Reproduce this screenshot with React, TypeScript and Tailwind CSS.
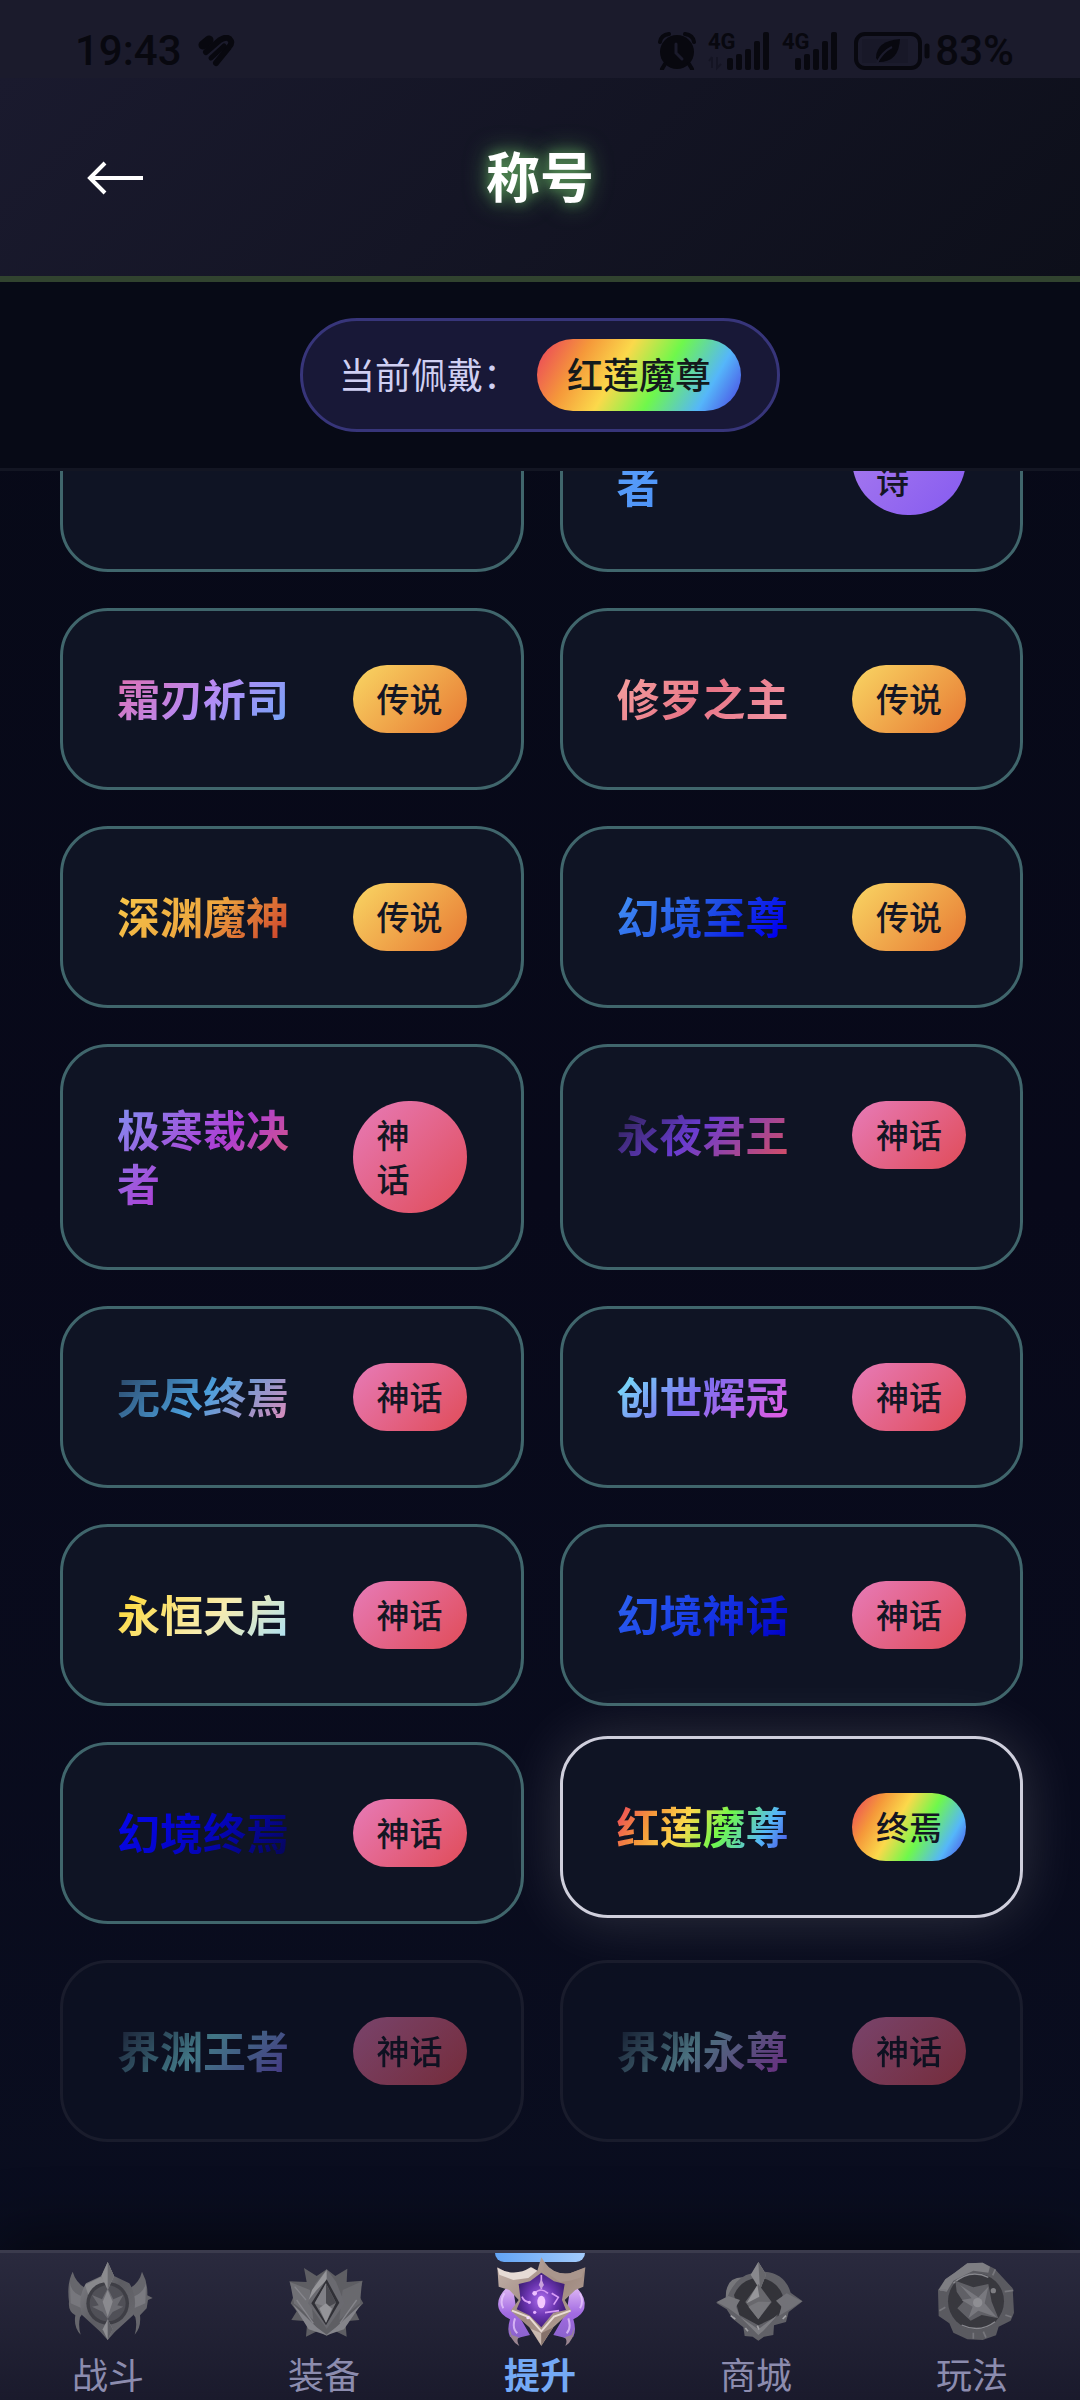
import { useEffect, useRef, useState } from "react";
import clsx from "clsx";

type Rarity = "epic" | "legend" | "myth" | "final";

type TitleItem = {
  id: number;
  name: string;
  rarity: Rarity;
  color: string;
  locked?: boolean;
};

const rarityLabel: Record<Rarity, string> = {
  epic: "史诗",
  legend: "传说",
  myth: "神话",
  final: "终焉",
};

const rainbow = "bg-[linear-gradient(120deg,#ea3d5e_0%,#f5983a_22%,#fbd94b_40%,#6ff84b_60%,#55b6fa_82%,#4a3fe0_100%)]";

const rarityStyle: Record<Rarity, string> = {
  epic: "bg-[linear-gradient(135deg,#ae80ee,#855af0)]",
  legend: "bg-[linear-gradient(135deg,#f9d663,#e77833)]",
  myth: "bg-[linear-gradient(135deg,#e77bb8,#e04c58)]",
  final: rainbow,
};

const titles: TitleItem[] = [
  { id: 1, name: "星辰使徒", rarity: "epic", color: "bg-[linear-gradient(135deg,#60a5fa,#3b82f6)]" },
  { id: 2, name: "苍穹守望者", rarity: "epic", color: "bg-[linear-gradient(135deg,#60a5fa,#3b82f6)]" },
  { id: 3, name: "霜刃祈司", rarity: "legend", color: "bg-[linear-gradient(135deg,#e06fae_0%,#b78af4_50%,#6fa6f8_100%)]" },
  { id: 4, name: "修罗之主", rarity: "legend", color: "bg-[linear-gradient(135deg,#f5a3a0_0%,#e87587_50%,#f59aa8_100%)]" },
  { id: 5, name: "深渊魔神", rarity: "legend", color: "bg-[linear-gradient(135deg,#f8c84a_0%,#eda73f_50%,#c9362a_100%)]" },
  { id: 6, name: "幻境至尊", rarity: "legend", color: "bg-[linear-gradient(135deg,#4596f7_0%,#1f4fe4_50%,#0000ee_90%)]" },
  { id: 7, name: "极寒裁决者", rarity: "myth", color: "bg-[linear-gradient(135deg,#8092f2_0%,#ad3ed4_50%,#d0528c_75%,#ea5a6a_100%)]" },
  { id: 8, name: "永夜君王", rarity: "myth", color: "bg-[linear-gradient(135deg,#2f2358_5%,#6a3cd0_45%,#dc4f5e_100%)]" },
  { id: 9, name: "无尽终焉", rarity: "myth", color: "bg-[linear-gradient(135deg,#2c4a6b_5%,#4b9fdc_50%,#e88ab8_100%)]" },
  { id: 10, name: "创世辉冠", rarity: "myth", color: "bg-[linear-gradient(135deg,#76f0fa_0%,#7d6ff0_45%,#d85de4_90%)]" },
  { id: 11, name: "永恒天启", rarity: "myth", color: "bg-[linear-gradient(135deg,#fdd835_5%,#f8ecae_55%,#a8e0f8_100%)]" },
  { id: 12, name: "幻境神话", rarity: "myth", color: "bg-[linear-gradient(135deg,#2f66f0_0%,#1a3fe8_45%,#0000c8_95%)]" },
  { id: 13, name: "幻境终焉", rarity: "myth", color: "bg-[linear-gradient(135deg,#0606f0_0%,#0404c4_50%,#06065c_95%)]" },
  { id: 14, name: "红莲魔尊", rarity: "final", color: rainbow },
  { id: 15, name: "界渊王者", rarity: "myth", locked: true, color: "bg-[linear-gradient(135deg,#33465c_8%,#7ae0ec_48%,#7f6fe8_92%)]" },
  { id: 16, name: "界渊永尊", rarity: "myth", locked: true, color: "bg-[linear-gradient(135deg,#2a3d50_8%,#8ad2dc_45%,#c25ae0_90%)]" },
];

function SignalIcon({ offset, data }: { offset: number; data?: boolean }) {
  const tops = [26, 22, 17, 9, 0];
  return (
    <svg width={offset + 43} height="38" className="overflow-visible" fill="currentColor">
      <text x="0" y="17" fontSize="22" fontWeight="700" fontFamily="Roboto, sans-serif">4G</text>
      {data && <path d="M4 25v11m-3-7 3-4M9 25v11l4-4" stroke="currentColor" strokeWidth="2" fill="none" opacity="0.3" />}
      {tops.map((top, i) => (
        <rect key={i} x={offset + i * 9} y={top} width="6" height={38 - top} rx="2" />
      ))}
    </svg>
  );
}

function StatusBar() {
  return (
    <div className="flex h-[78px] shrink-0 items-center justify-between bg-[#1b1b2c] pt-6 pr-[66px] pl-[75px] font-[Roboto,sans-serif] text-[42px] leading-[54px] font-medium text-[#08080f]">
      <div className="flex items-center gap-4">
        <span>19:43</span>
        <svg width="38" height="32" viewBox="0 0 38 32" fill="none" stroke="currentColor" strokeLinecap="round">
          <path d="M5 10 11 5" strokeWidth="9" />
          <path d="M8 17 22 5Q30 0 33 6 34 9 31 12L18 28" strokeWidth="6" />
          <path d="M13 23 26 11" strokeWidth="5" />
        </svg>
      </div>
      <div className="flex items-center gap-3">
        <svg width="38" height="38" viewBox="0 0 38 38" fill="currentColor">
          <circle cx="19" cy="20" r="17" />
          <path d="M2 10Q3 3 11 2M36 10Q35 3 27 2M7 32l-3 5M31 32l3 5" stroke="currentColor" strokeWidth="4" fill="none" strokeLinecap="round" />
          <path d="M18 12v9l6 6" stroke="#1b1b2c" strokeWidth="3" fill="none" strokeLinecap="round" />
        </svg>
        <SignalIcon offset={19} data />
        <SignalIcon offset={13} />
        <div className="flex items-center gap-1 pl-1">
          <svg width="77" height="38" viewBox="0 0 77 38" fill="none" stroke="currentColor">
            <rect x="2" y="2" width="64" height="34" rx="9" strokeWidth="4" />
            <rect x="8" y="7" width="46" height="24" fill="currentColor" stroke="none" opacity="0.12" />
            <path d="M22 26Q22 9 46 7 45 30 25 30Z" fill="currentColor" stroke="none" />
            <path d="M23 31Q28 20 38 15" stroke="#1b1b2c" strokeWidth="2" />
            <path d="M73 14v10" strokeWidth="5" strokeLinecap="round" />
          </svg>
          <span>83%</span>
        </div>
      </div>
    </div>
  );
}

function Header() {
  return (
    <header className="grid h-[204px] shrink-0 grid-cols-[1fr_auto_1fr] items-center border-b-[6px] border-[#31432f] bg-[linear-gradient(135deg,#1a1a2e_0%,#0d0f1a_100%)] px-[75px]">
      <button type="button" aria-label="返回" className="justify-self-start px-3 py-2 text-white">
        <svg width="56" height="36" viewBox="0 0 56 36" fill="none" stroke="currentColor" strokeWidth="4">
          <path d="M56 19H3M18 4 3 19l15 15" />
        </svg>
      </button>
      <h1 className="pb-1 text-[54px] leading-[72px] font-bold text-white [text-shadow:0_0_24px_#5a9a58,0_0_12px_#4c8050]">称号</h1>
    </header>
  );
}

function TitleCard({ item, active, onSelect }: { item: TitleItem; active: boolean; onSelect: () => void }) {
  const wraps = item.name.length > 4;
  const label = rarityLabel[item.rarity];
  return (
    <button
      type="button"
      onClick={onSelect}
      disabled={item.locked}
      className={clsx(
        "flex items-start rounded-[48px] border-[3px] bg-[#0f1424] p-[54px] text-left",
        active && "-translate-y-[6px] border-[#cfcfdc] shadow-[0_0_60px_rgba(255,255,255,0.16)]",
        !active && !item.locked && "border-[#40666c]",
        item.locked && "border-[#2a2c3a] opacity-50"
      )}
    >
      <span className="flex flex-1 items-center justify-between">
        <span className={clsx("max-w-[180px] bg-clip-text pb-1 text-[43px] leading-[54px] font-bold text-transparent", item.color)}>
          {item.name}
        </span>
        <span className={clsx("min-w-[114px] rounded-full px-6 pt-[11px] pb-[13px] text-[33px] leading-[44px] font-medium text-[#141624]", rarityStyle[item.rarity])}>
          {wraps ? <>{label[0]}<br />{label[1]}</> : label}
        </span>
      </span>
    </button>
  );
}

function BattleIcon() {
  return (
    <svg viewBox="198 57 252 252" className="size-[84px] overflow-visible">
      <defs>
        <linearGradient id="steel" x1="0" y1="0" x2="1" y2="1">
          <stop offset="0" stopColor="#85858b" />
          <stop offset="0.5" stopColor="#5c5c62" />
          <stop offset="1" stopColor="#6d6d73" />
        </linearGradient>
      </defs>
      <path d="M218 95Q228 130 262 148L252 215 240 232Q234 258 242 284 220 262 226 226 204 214 207 185 200 130 218 95Z" fill="#66666c" />
      <path d="M426 95Q418 130 384 148L394 215 406 232Q412 258 404 284 424 262 420 226L440 205 444 180 458 174 442 166Q444 128 426 95Z" fill="#66666c" />
      <path d="M210 130Q215 160 250 170L245 205 212 190Z" fill="#77777d" />
      <path d="M438 130Q430 160 396 172L402 205 436 190Z" fill="#7a7a80" />
      <path d="M323 66 342 108 388 130Q415 175 400 225L345 275 323 300 301 275 246 225Q231 175 258 130L304 108Z" fill="url(#steel)" />
      <path d="M255 135 304 110 323 135 265 165Z" fill="#88888c" />
      <circle cx="323" cy="190" r="64" fill="#3e3e45" />
      <circle cx="323" cy="190" r="54" fill="#505057" />
      <path d="M323 66 342 108 323 150 304 108Z" fill="#8b8b8f" />
      <path d="M323 66 342 108 323 150Z" fill="#6a6a6f" />
      <path d="M323 145 340 178 370 165 352 196 370 200 338 216 323 236 308 216 276 200 296 196 276 165 306 178Z" fill="#6c6c72" />
      <path d="M323 150 338 185 323 230 308 185Z" fill="#8a8a8f" />
      <path d="M323 238 338 268 323 300 308 268Z" fill="#8e8e92" />
      <path d="M323 238 338 268 323 300Z" fill="#5d5d63" />
    </svg>
  );
}

function GearIcon() {
  return (
    <svg viewBox="846 57 252 252" className="size-[84px] overflow-visible">
      <path d="M980 88 1006 108 1042 86 1040 126 1088 122 1076 166 1090 190 1066 214 1078 240 1036 244 1040 290 1004 272 980 288 954 272 918 290 922 244 874 240 890 214 872 190 882 166 868 124 920 126 912 84 950 108Z" fill="#5e5e63" />
      <path d="M870 126 930 150 940 240 882 190Z" fill="#707075" />
      <path d="M1086 124 1028 150 1018 240 1080 190Z" fill="#69696e" />
      <path d="M878 192 950 262 980 284 1008 262 1084 192 1032 268 980 286 926 268Z" fill="#84848a" />
      <path d="M980 88 1008 125 1034 190 980 266 924 190 946 130Z" fill="#6a6a70" />
      <path d="M980 90 936 150 926 180 950 150 980 120Z" fill="#96969a" />
      <path d="M980 118 1018 188 978 256 934 190Z" fill="#303036" />
      <path d="M978 130 1008 188 978 248 944 190Z" fill="#707075" />
      <path d="M978 130 1008 188 978 205Z" fill="#4a4a50" />
      <path d="M978 130 978 200 944 190Z" fill="#808086" />
      <path d="M958 205 978 190 996 206 978 248Z" fill="#949499" />
      <path d="M890 180 940 250M1070 180 1020 250M884 140 918 180" stroke="#85858b" strokeWidth="4" />
    </svg>
  );
}

function UpgradeIcon() {
  return (
    <svg viewBox="285 48 270 270" className="relative size-[90px] overflow-visible">
      <defs>
        <linearGradient id="wing" x1="0" y1="0" x2="0" y2="1">
          <stop offset="0" stopColor="#dcb4f4" />
          <stop offset="0.5" stopColor="#a26be2" />
          <stop offset="1" stopColor="#8a62cc" />
        </linearGradient>
        <linearGradient id="metal" x1="0" y1="0" x2="1" y2="1">
          <stop offset="0" stopColor="#c4b3ac" />
          <stop offset="0.5" stopColor="#a08a80" />
          <stop offset="1" stopColor="#b9a79e" />
        </linearGradient>
        <radialGradient id="core">
          <stop offset="0" stopColor="#b070f0" />
          <stop offset="0.6" stopColor="#6a34b0" />
          <stop offset="1" stopColor="#43207c" />
        </radialGradient>
      </defs>
      <path d="M318 145Q288 175 296 205 302 225 330 238 320 270 330 290 345 300 362 292L390 285 350 215 340 150Z" fill="url(#wing)" />
      <path d="M532 145Q560 175 553 205 548 225 520 238 530 270 520 290 505 300 488 292L460 285 500 215 510 150Z" fill="url(#wing)" />
      <path d="M328 262Q326 300 358 318 348 302 356 292L335 285ZM522 262Q524 300 496 318 504 302 494 292L515 285Z" fill="#9a8590" />
      <path d="M313 160Q298 185 310 205M540 160Q552 185 540 205M345 235Q335 265 352 280M505 235Q515 265 500 280" stroke="#ecd0ff" strokeWidth="6" fill="none" opacity="0.7" />
      <path d="M424 52 436 70Q460 108 510 100L556 82 550 140 526 150 494 180 514 212 460 262 424 318 388 262 332 212 356 180 328 150 296 140 292 82 325 100Q370 108 395 82L412 92Z" fill="url(#metal)" />
      <path d="M292 84Q345 112 392 82L412 92 385 114 340 120 298 104Z" fill="#e6dbd6" />
      <path d="M432 66Q462 106 510 100L554 84 545 112 510 122 480 126 430 92Z" fill="#aa968d" />
      <path d="M424 98 462 124 494 132 486 180 498 210 460 218 424 262 388 226 350 208 362 180 356 132 390 124Z" fill="url(#core)" />
      <path d="M336 212 388 232 424 274 462 230 512 212" fill="none" stroke="#e9dbd4" strokeWidth="6" />
      <path d="M424 280V316L392 266Z" fill="#c9b9b0" />
      <path d="M424 280V316L460 262Z" fill="#86726b" />
      <ellipse cx="424" cy="186" rx="12" ry="19" fill="#f3c8ff" />
      <path d="M424 105v42M404 160q18-20 40 0M366 170q6 16 22 16M455 160l20 12-14 22M435 218l42-6" stroke="#d89cf6" strokeWidth="5" fill="none" />
      <path d="M416 135 424 118 432 135 424 146Z" fill="#c9a0dc" />
      <circle cx="404" cy="160" r="7" fill="#eec0ff" />
      <circle cx="388" cy="187" r="5" fill="#e4b0ff" />
      <circle cx="404" cy="217" r="5" fill="#e4b0ff" />
      <circle cx="384" cy="233" r="5" fill="#f3d8ff" />
    </svg>
  );
}

function ShopIcon() {
  return (
    <svg viewBox="102 57 252 252" className="size-[84px] overflow-visible">
      <path d="M138 182Q132 112 188 112L200 150 160 200Z" fill="#77777b" />
      <path d="M235 66 254 95Q315 100 332 158L368 184 326 216 318 246 282 256 280 285 252 290 235 302 218 290 194 288 190 262 158 236 140 208 108 188 140 176Q165 110 216 100Z" fill="#616167" />
      <path d="M235 112Q290 120 308 165L300 225 235 256 178 225 162 165Q180 120 235 112Z" fill="#333339" />
      <path d="M235 66 258 104 240 150 212 104Z" fill="#88888d" />
      <path d="M235 66 258 104 240 150Z" fill="#66666b" />
      <path d="M235 132 275 186 235 238 196 186Z" fill="#68686d" />
      <path d="M232 135 238 170 200 190Z" fill="#96969a" />
      <path d="M235 185 272 186 235 238 205 200Z" fill="#77777c" />
      <path d="M110 186 145 168 180 180 168 200 180 230 145 205Z" fill="#77777c" />
      <path d="M366 184 320 160 288 182 305 200 296 228 330 208Z" fill="#727278" />
      <path d="M180 230 235 268 296 222 250 272 235 285 218 268Z" fill="#7e7e83" />
      <path d="M152 227l14 10M196 264l8 10M318 227l-10 10M232 257l5 12" stroke="#a0a0a4" strokeWidth="5" />
    </svg>
  );
}

function PlayIcon() {
  return (
    <svg viewBox="750 57 252 252" className="size-[84px] overflow-visible">
      <path d="M862 70 908 68 944 86 966 110 998 145 1002 218 992 242 956 260 948 286 908 300 862 298 820 278 808 250 776 228 774 150 796 118 824 98Z" fill="#5a5a60" />
      <path d="M862 70 908 68 930 80 925 98 880 92 820 122 800 155 776 150 796 118 824 98Z" fill="#7e7e83" />
      <circle cx="888" cy="184" r="84" fill="#38383e" />
      <path d="M945 245Q900 280 845 255M820 130Q870 85 925 112" stroke="#88888e" strokeWidth="4" fill="none" />
      <path d="M826 122 880 142 925 132 935 185 955 235 905 225 872 242 850 222 832 205 850 185 830 155Z" fill="#606066" />
      <path d="M840 135 895 172 925 140 914 190 950 232 895 212 865 235 878 200 845 180 875 175Z" fill="#78787e" />
      <circle cx="893" cy="188" r="14" fill="#8e8e93" />
      <circle cx="940" cy="152" r="8" fill="#7e7e83" />
      <path d="M778 212l18-10M938 106l8-18M974 155l26-4M976 225l18 6M880 278v18M780 150h20M910 275l8 18" stroke="#77777d" strokeWidth="5" />
    </svg>
  );
}

const navItems = [
  { key: "battle", label: "战斗", Icon: BattleIcon },
  { key: "gear", label: "装备", Icon: GearIcon },
  { key: "upgrade", label: "提升", Icon: UpgradeIcon },
  { key: "shop", label: "商城", Icon: ShopIcon },
  { key: "play", label: "玩法", Icon: PlayIcon },
];

function BottomNav() {
  const [tab, setTab] = useState("upgrade");
  return (
    <nav className="relative grid shrink-0 grid-cols-5 border-t-[3px] border-[#3b3b4d] bg-[linear-gradient(180deg,#2a2a3e,#1a1a2c)] shadow-[0_-12px_60px_rgba(0,0,0,0.5)]">
      {navItems.map(({ key, label, Icon }) => (
        <button key={key} type="button" onClick={() => setTab(key)} className="relative flex flex-col items-center pb-[3px]">
          {tab === key && <span className="absolute top-0 h-[9px] w-[90px] rounded-b-[9px] bg-[linear-gradient(90deg,#62a4f5,#a3cbfb)]" />}
          <span className="flex h-24 items-center">
            <Icon />
          </span>
          <span className={clsx("text-[36px] leading-[48px]", tab === key ? "font-bold text-[#74a9f5]" : "text-[#8c8cae]")}>{label}</span>
        </button>
      ))}
    </nav>
  );
}

export default function App() {
  const [wearing, setWearing] = useState(14);
  const listRef = useRef<HTMLDivElement>(null);
  const current = titles.find((t) => t.id === wearing)!;

  // start at the newest titles
  useEffect(() => {
    if (listRef.current) listRef.current.scrollTop = listRef.current.scrollHeight;
  }, []);

  return (
    <div className="flex h-screen flex-col bg-[linear-gradient(180deg,#070a17_0%,#08091a_50%,#0a0e20_100%)] font-['Noto_Sans_CJK_SC',sans-serif]">
      <StatusBar />
      <Header />
      <div className="flex shrink-0 justify-center border-b-[3px] border-[#131623] bg-[#070a16] py-9">
        <div className="flex items-center gap-[18px] rounded-full border-[3px] border-[#37357a] bg-[#181837] px-9 py-[18px] text-[36px] leading-[48px]">
          <span className="pb-1 text-[#cfcff2]">当前佩戴：</span>
          <span className={clsx("rounded-full px-[30px] pt-[10px] pb-[14px] font-medium text-[#141a1c]", rarityStyle[current.rarity])}>{current.name}</span>
        </div>
      </div>
      <main ref={listRef} className="min-h-0 flex-1 overflow-y-auto [scrollbar-width:none]">
        <div className="grid grid-cols-2 gap-9 pt-9 pr-[57px] pb-[108px] pl-[60px]">
          {titles.map((item) => (
            <TitleCard key={item.id} item={item} active={item.id === wearing} onSelect={() => setWearing(item.id)} />
          ))}
        </div>
      </main>
      <BottomNav />
    </div>
  );
}
